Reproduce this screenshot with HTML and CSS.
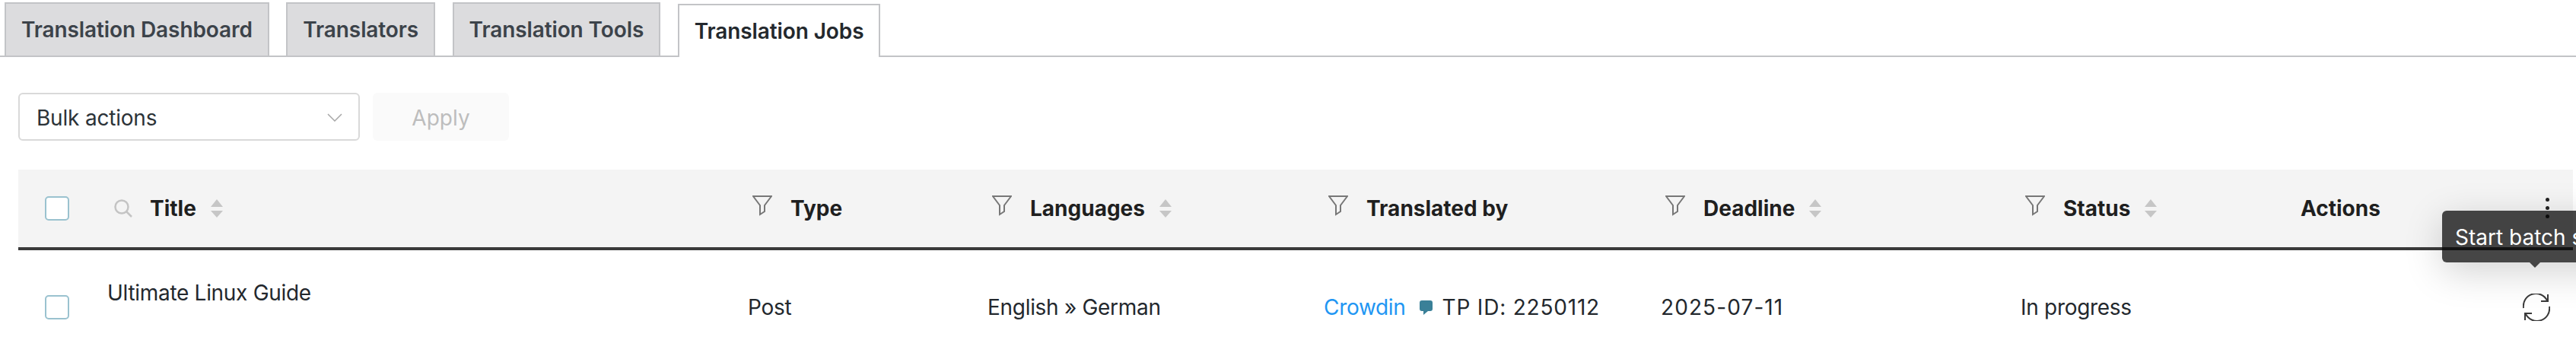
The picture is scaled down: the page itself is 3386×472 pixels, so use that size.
FILE: index.html
```html
<!DOCTYPE html>
<html lang="en">

<head>
  <meta charset="UTF-8">
  <title>Translation Jobs</title>
  <link rel="stylesheet" href="styles.css">
</head>

<body>

  <nav class="tabs">
    <a class="tab" href="#">Translation Dashboard</a>
    <a class="tab" href="#">Translators</a>
    <a class="tab" href="#">Translation Tools</a>
    <a class="tab tab-active" href="#">Translation Jobs</a>
  </nav>

  <div class="content">
    <div class="bulk-bar">
      <div class="bulk-select">
        <span>Bulk actions</span>
        <svg class="chevron" viewBox="0 0 20 11"><path d="M1 1l9 9 9-9" /></svg>
      </div>
      <button class="apply" type="button" disabled>Apply</button>
    </div>

    <table class="jobs">
      <colgroup>
        <col class="col-check">
        <col class="col-title">
        <col class="col-type">
        <col class="col-lang">
        <col class="col-by">
        <col class="col-deadline">
        <col class="col-status">
        <col>
      </colgroup>
      <thead>
        <tr>
          <th><span class="check"></span></th>
          <th>
            <div class="head head-title">
              <svg class="search" viewBox="0 0 24 24"><circle cx="10" cy="10" r="8.5" /><path d="M16 16l7 7" /></svg>
              <span>Title</span>
              <svg class="sort" viewBox="0 0 16 24"><path d="M8 0l8 10H0zM8 24L0 15h16z" /></svg>
            </div>
          </th>
          <th>
            <div class="head">
              <svg class="funnel" viewBox="0 0 26 27"><path d="M1 1h24l-9 12v8l-6 4V13z" /></svg>
              <span>Type</span>
            </div>
          </th>
          <th>
            <div class="head">
              <svg class="funnel" viewBox="0 0 26 27"><path d="M1 1h24l-9 12v8l-6 4V13z" /></svg>
              <span>Languages</span>
              <svg class="sort" viewBox="0 0 16 24"><path d="M8 0l8 10H0zM8 24L0 15h16z" /></svg>
            </div>
          </th>
          <th>
            <div class="head">
              <svg class="funnel" viewBox="0 0 26 27"><path d="M1 1h24l-9 12v8l-6 4V13z" /></svg>
              <span>Translated by</span>
            </div>
          </th>
          <th>
            <div class="head">
              <svg class="funnel" viewBox="0 0 26 27"><path d="M1 1h24l-9 12v8l-6 4V13z" /></svg>
              <span>Deadline</span>
              <svg class="sort" viewBox="0 0 16 24"><path d="M8 0l8 10H0zM8 24L0 15h16z" /></svg>
            </div>
          </th>
          <th>
            <div class="head">
              <svg class="funnel" viewBox="0 0 26 27"><path d="M1 1h24l-9 12v8l-6 4V13z" /></svg>
              <span>Status</span>
              <svg class="sort" viewBox="0 0 16 24"><path d="M8 0l8 10H0zM8 24L0 15h16z" /></svg>
            </div>
          </th>
          <th class="th-actions">
            <span>Actions</span>
            <span class="dots"><i></i><i></i><i></i></span>
          </th>
        </tr>
      </thead>
      <tbody>
        <tr>
          <td><span class="check"></span></td>
          <td class="td-title">Ultimate Linux Guide</td>
          <td>Post</td>
          <td>English » German</td>
          <td>
            <div class="by">
              <a class="provider" href="#">Crowdin</a>
              <svg class="bubble" viewBox="0 0 17 19"><path d="M3 0h11a3 3 0 0 1 3 3v8a3 3 0 0 1-3 3h-3l-6 5v-5H3a3 3 0 0 1-3-3V3a3 3 0 0 1 3-3z" /></svg>
              <span class="tp-id">TP ID: 2250112</span>
            </div>
          </td>
          <td class="td-date">2025-07-11</td>
          <td>In progress</td>
          <td class="td-actions">
            <svg class="sync" viewBox="0 0 36 36">
              <path d="M1 19A16.5 16.5 0 0 1 32 9M35 17A16.5 16.5 0 0 1 4 27" />
              <path d="M33 1v9h-9M3 35v-9h9" />
            </svg>
          </td>
        </tr>
      </tbody>
    </table>
  </div>

  <div class="tooltip">Start batch sync</div>

</body>

</html>
```

FILE: styles.css
```css
* {
  margin: 0;
  padding: 0;
  box-sizing: border-box;
}

html,
body {
  width: 100%;
  height: 100%;
}

body {
  position: relative;
  overflow: hidden;
  background-color: #fff;
  color: #23282d;
  font-family: Inter, "Liberation Sans", sans-serif;
  font-size: 28px;
}

a {
  text-decoration: none;
}

/* tabs */
.tabs {
  display: flex;
  align-items: flex-end;
  gap: 22.5px;
  height: 75px;
  padding-left: 6px;
  border-bottom: 2px solid #c3c4c7;
}

.tab {
  display: flex;
  align-items: center;
  height: 70px;
  padding: 0 20px;
  background-color: #dcdcde;
  border: 2px solid #c3c4c7;
  border-bottom: 0;
  color: #3c434a;
  font-weight: 600;
  letter-spacing: -0.1px;
}

.tab-active {
  margin-bottom: -2px;
  background-color: #fff;
  color: #23282d;
}

/* bulk actions */
.content {
  padding: 0 4px 0 24px;
}

.bulk-bar {
  display: flex;
  gap: 17px;
  margin-top: 47px;
}

.bulk-select {
  display: flex;
  justify-content: space-between;
  align-items: center;
  width: 449px;
  height: 63px;
  padding: 2px 21px 0 22px;
  border: 2px solid #d9d9d9;
  border-radius: 6px;
  color: #2c3338;
  letter-spacing: -0.2px;
}

.chevron {
  width: 20px;
  height: 11px;
  fill: none;
  stroke: #a7a7a7;
  stroke-width: 1.5;
}

.apply {
  width: 179px;
  height: 63px;
  padding-top: 2px;
  background-color: #fafafa;
  border: 0;
  border-radius: 6px;
  color: #bdbdbd;
  font-family: inherit;
  font-size: 28px;
}

/* table */
.jobs {
  width: 100%;
  margin-top: 38px;
  border-collapse: collapse;
  table-layout: fixed;
}

.col-check {
  width: 98px;
}

.col-title {
  width: 841px;
}

.col-type {
  width: 315px;
}

.col-lang {
  width: 442px;
}

.col-by {
  width: 443px;
}

.col-deadline {
  width: 473px;
}

.col-status {
  width: 368px;
}

.jobs th {
  height: 104px;
  padding: 0 20px;
  background-color: #f4f4f4;
  border-bottom: 4px solid #3a3a3a;
  text-align: left;
  font-weight: 700;
  color: #1f1f1f;
}

.jobs td {
  height: 152px;
  padding: 0 20px;
  vertical-align: middle;
  white-space: nowrap;
  letter-spacing: -0.3px;
}

.jobs th:first-child,
.jobs td:first-child {
  padding: 0 0 0 35px;
}

.check {
  display: block;
  width: 32px;
  height: 32px;
  background-color: #fff;
  border: 2px solid #9ac2cf;
  border-radius: 5px;
}

.head {
  display: flex;
  align-items: center;
  padding-left: 6px;
}

.head-title {
  padding-left: 8px;
}

.search {
  width: 24px;
  height: 24px;
  margin-right: 23px;
  fill: none;
  stroke: #c4c4c4;
  stroke-width: 2.5;
}

.funnel {
  width: 26px;
  height: 27px;
  margin: -8px 24px 0 0;
  fill: none;
  stroke: #777;
  stroke-width: 2;
}

.sort {
  width: 16px;
  height: 24px;
  margin-left: 19px;
  fill: #c6c6c6;
}

.th-actions {
  position: relative;
}

.dots {
  position: absolute;
  top: 37px;
  left: 342px;
  display: flex;
  flex-direction: column;
  gap: 6px;
}

.dots i {
  width: 5px;
  height: 5px;
  background-color: #222;
  border-radius: 50%;
}

.jobs .td-title {
  padding: 0 20px 38px 19px;
}

.jobs .td-date {
  letter-spacing: 1.1px;
}

.by {
  display: flex;
  align-items: center;
}

.provider {
  color: #2196f3;
}

.bubble {
  width: 17px;
  height: 19px;
  margin: 0 13px 0 18px;
  fill: #3a8098;
}

.tp-id {
  letter-spacing: 0.8px;
}

.sync {
  display: block;
  width: 36px;
  height: 36px;
  margin-left: 292px;
  fill: none;
  stroke: #3a3a3a;
  stroke-width: 2;
}

/* tooltip over the table */
.tooltip {
  position: absolute;
  top: 277px;
  left: 3210px;
  display: flex;
  align-items: center;
  height: 68px;
  padding: 2px 17px 0;
  background-color: rgba(5, 5, 5, 0.74);
  border-radius: 6px;
  box-shadow: 0 12px 50px rgba(0, 0, 0, 0.18);
  color: #fff;
  white-space: nowrap;
}

.tooltip::after {
  content: "";
  position: absolute;
  top: 68px;
  left: 115px;
  border-left: 7px solid transparent;
  border-right: 7px solid transparent;
  border-top: 7px solid #444;
}
```
